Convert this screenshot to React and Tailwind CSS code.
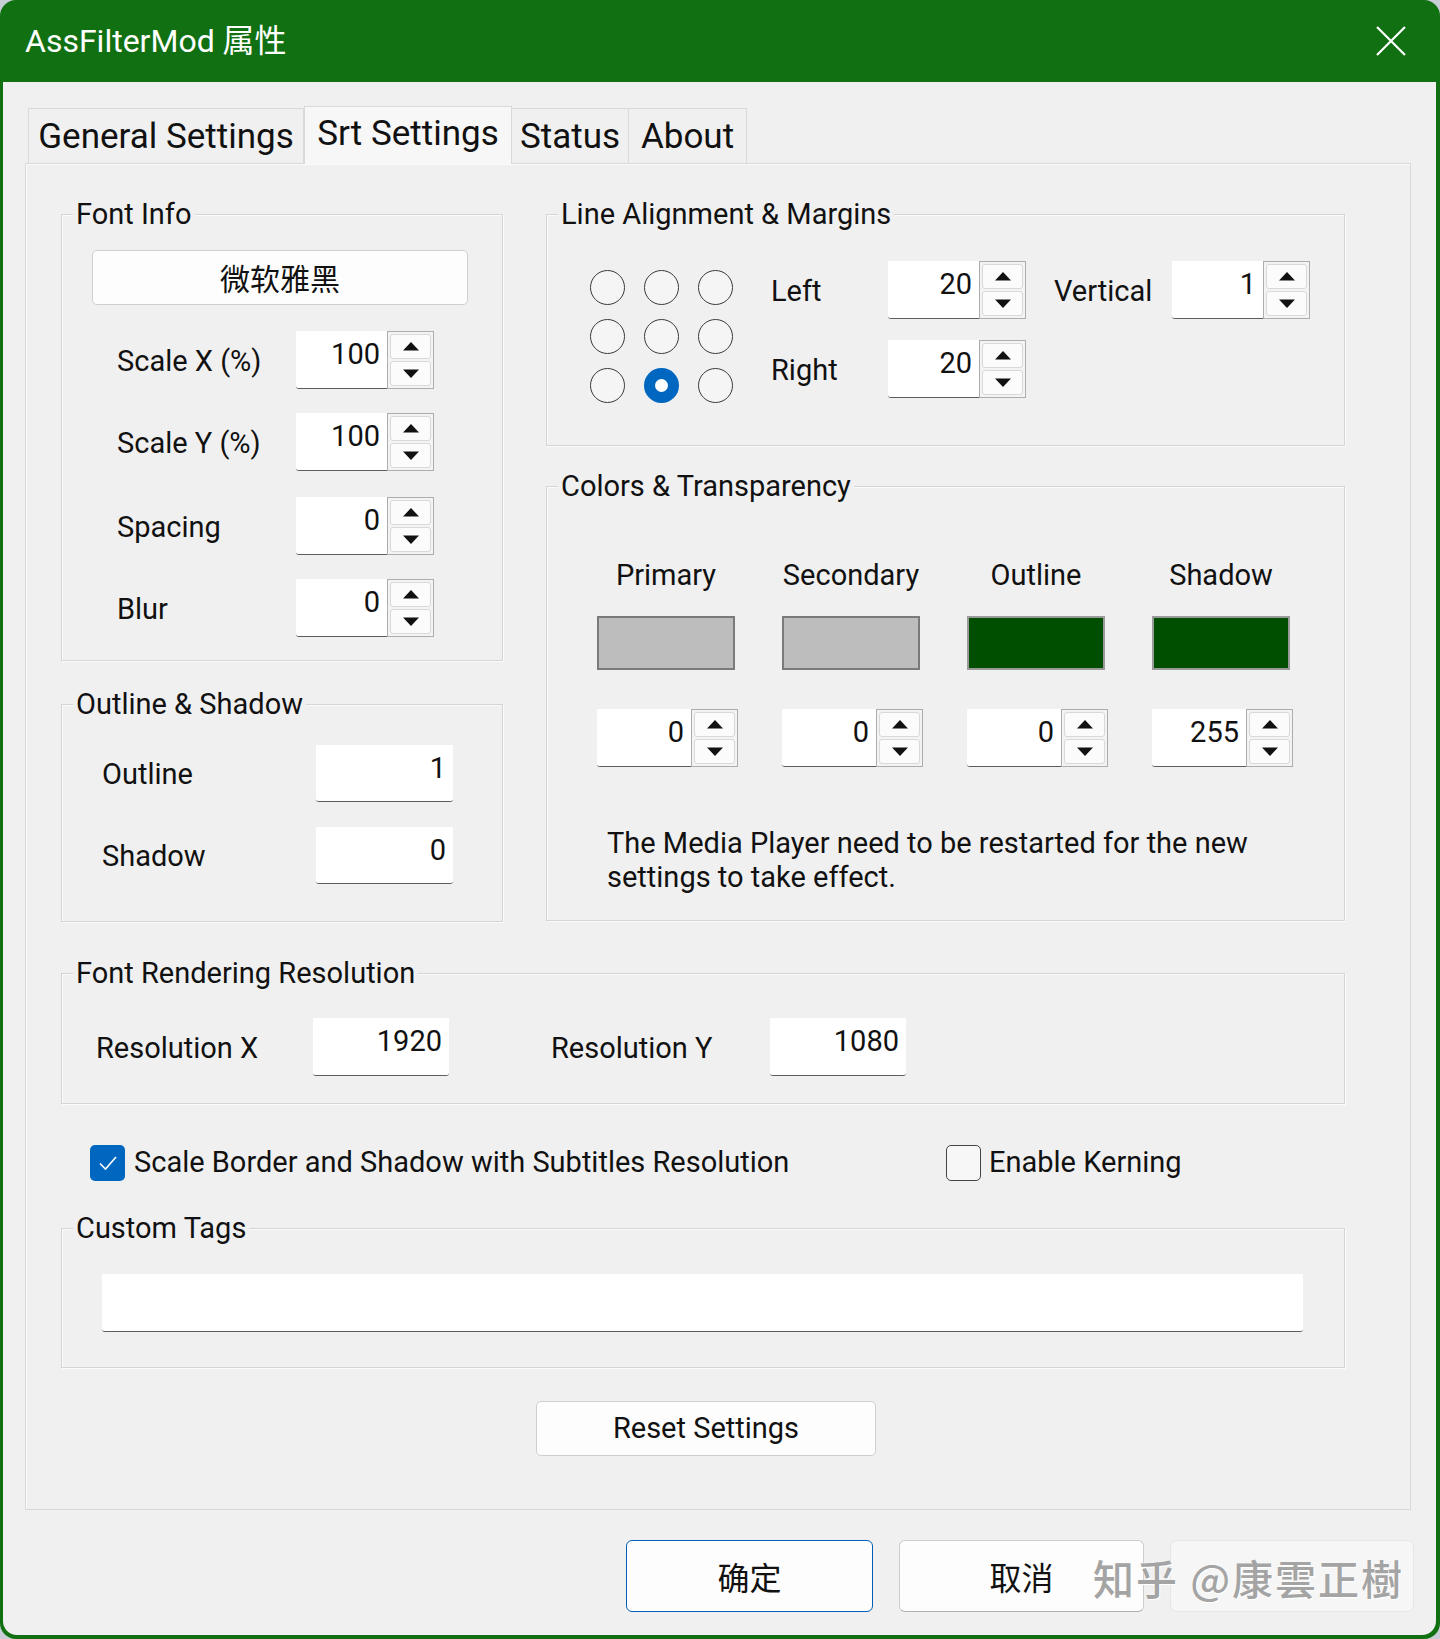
import React from "react";

const Tri = ({ down }) => (
  <svg width="18" height="11" viewBox="0 0 18 11">
    <path d={down ? "M1 1.5h16L9 10z" : "M1 9.5h16L9 1z"} fill="#111" />
  </svg>
);

const Spin = ({ value, wide }) => (
  <div className={wide ? "flex h-[58px] w-[141px]" : "flex h-[58px] w-[138px]"}>
    <div className="flex-1 bg-white border-b-[1.5px] border-[#5c5c5c] rounded-bl-[3px] flex justify-end items-start pt-[3px] pr-[7px] leading-[40px]">
      {value}
    </div>
    <div className="w-[47px] border border-[#adadad] bg-[#f3f3f3] flex flex-col p-[2px] gap-[2px]">
      <div className="flex-1 border border-[#d9d9d9] rounded-[3px] bg-[#fbfbfb] flex items-center justify-center">
        <Tri />
      </div>
      <div className="flex-1 border border-[#d9d9d9] rounded-[3px] bg-[#fbfbfb] flex items-center justify-center">
        <Tri down />
      </div>
    </div>
  </div>
);

const Edit = ({ value, className }) => (
  <div className={className}>
    <div className="h-full bg-white border-b-[1.5px] border-[#5c5c5c] rounded-b-[3px] flex justify-end items-start pt-[3px] pr-[7px] leading-[40px]">
      {value}
    </div>
  </div>
);

const GroupBox = ({ title, className, children }) => (
  <div className={className}>
    <div className="relative h-full border border-[#d4d4d4] shadow-[inset_1px_1px_0_#fbfbfb,1px_1px_0_#fbfbfb]">
      <div className="absolute left-[11px] -top-[21px] bg-[#f0f0f0] px-[3px] text-[29px] leading-[40px]">
        {title}
      </div>
      {children}
    </div>
  </div>
);

const Radio = ({ checked }) =>
  checked ? (
    <div className="w-[35px] h-[35px] rounded-full bg-[#0067c0] flex items-center justify-center">
      <div className="w-[13px] h-[13px] rounded-full bg-white" />
    </div>
  ) : (
    <div className="w-[35px] h-[35px] rounded-full border-[1.5px] border-[#3a3a3a] bg-[#f5f5f5]" />
  );

const Row = ({ label, value }) => (
  <div className="flex items-center h-[58px]">
    <div className="w-[179px] mt-[4px]">{label}</div>
    <Spin value={value} />
  </div>
);

export default function App() {
  const swatches = [
    { name: "Primary", color: "bg-[#bdbdbd] border-[#7a7a7a]", value: "0" },
    { name: "Secondary", color: "bg-[#bdbdbd] border-[#7a7a7a]", value: "0" },
    { name: "Outline", color: "bg-[#004f00] border-[#9a9a9a]", value: "0" },
    { name: "Shadow", color: "bg-[#004f00] border-[#9a9a9a]", value: "255" },
  ];

  return (
    <div className="w-[1440px] h-[1639px] bg-[#c9cdd8] font-['Roboto','Noto_Sans_CJK_SC',sans-serif] text-[29px] text-[#111]">
      <div className="w-full h-full rounded-[16px] bg-[#117012] flex flex-col overflow-hidden">
        {/* title bar */}
        <div className="h-[82px] shrink-0 flex items-center justify-between pl-[25px] pr-[34px]">
          <div className="text-white text-[32px] leading-none">AssFilterMod 属性</div>
          <svg width="30" height="30" viewBox="0 0 30 30">
            <path d="M1 1L29 29M29 1L1 29" stroke="#ffffff" strokeWidth="2.2" />
          </svg>
        </div>

        {/* body */}
        <div className="flex-1 ml-[3px] mr-[4px] mb-[4px] bg-[#f0f0f0] rounded-b-[14px] pl-[22px] pr-[25px] pt-[24px]">
          {/* tabs */}
          <div className="flex items-end h-[57px] pl-[3px]">
            <div className="w-[276px] h-[55px] border border-b-0 border-[#d9d9d9] flex items-center justify-center text-[35px] leading-none">
              General Settings
            </div>
            <div className="relative z-10 -mb-[1px] w-[208px] h-[58px] border border-b-0 border-[#d9d9d9] bg-[#f7f7f7] flex items-center justify-center text-[35px] leading-none pb-[4px]">
              Srt Settings
            </div>
            <div className="w-[117px] h-[55px] border border-b-0 border-l-0 border-[#d9d9d9] flex items-center justify-center text-[35px] leading-none">
              Status
            </div>
            <div className="w-[118px] h-[55px] border border-b-0 border-l-0 border-[#d9d9d9] flex items-center justify-center text-[35px] leading-none">
              About
            </div>
          </div>

          {/* panel */}
          <div className="border border-[#d9d9d9] shadow-[inset_1px_1px_0_#fafafa] pl-[35px] pr-[65px] pt-[50px] pb-[53px]">
            <div className="flex gap-[43px] items-start">
              {/* left column */}
              <div className="w-[442px] flex flex-col">
                <GroupBox title="Font Info" className="h-[447px]">
                  <div className="pt-[35px] pl-[30px]">
                    <div className="w-[376px] h-[55px] rounded-[5px] border border-[#cfcfcf] bg-[#fdfdfd] flex items-center justify-center text-[30px] font-['Noto_Sans_CJK_SC',sans-serif]">
                      微软雅黑
                    </div>
                  </div>
                  <div className="pl-[55px] mt-[26px] flex flex-col">
                    <Row label="Scale X (%)" value="100" />
                    <div className="mt-[24px]">
                      <Row label="Scale Y (%)" value="100" />
                    </div>
                    <div className="mt-[26px]">
                      <Row label="Spacing" value="0" />
                    </div>
                    <div className="mt-[24px]">
                      <Row label="Blur" value="0" />
                    </div>
                  </div>
                </GroupBox>

                <GroupBox title="Outline & Shadow" className="mt-[43px] h-[218px]">
                  <div className="pt-[40px] pl-[40px] flex flex-col gap-[25px]">
                    <div className="flex items-center h-[57px]">
                      <div className="w-[214px] mt-[3px]">Outline</div>
                      <Edit value="1" className="w-[137px] h-[57px]" />
                    </div>
                    <div className="flex items-center h-[57px]">
                      <div className="w-[214px] mt-[3px]">Shadow</div>
                      <Edit value="0" className="w-[137px] h-[57px]" />
                    </div>
                  </div>
                </GroupBox>
              </div>

              {/* right column */}
              <div className="w-[799px] flex flex-col">
                <GroupBox title="Line Alignment & Margins" className="h-[232px]">
                  <div className="flex pt-[46px] pl-[43px]">
                    <div className="mt-[9px] grid grid-cols-[35px_35px_35px] gap-x-[19px] gap-y-[14px]">
                      <Radio />
                      <Radio />
                      <Radio />
                      <Radio />
                      <Radio />
                      <Radio />
                      <Radio />
                      <Radio checked />
                      <Radio />
                    </div>
                    <div className="ml-[38px] flex flex-col gap-[21px]">
                      <div className="flex items-center">
                        <div className="w-[117px] mt-[4px]">Left</div>
                        <Spin value="20" />
                        <div className="ml-[28px] w-[118px] mt-[4px]">Vertical</div>
                        <Spin value="1" />
                      </div>
                      <div className="flex items-center">
                        <div className="w-[117px] mt-[4px]">Right</div>
                        <Spin value="20" />
                      </div>
                    </div>
                  </div>
                </GroupBox>

                <GroupBox title="Colors & Transparency" className="mt-[40px] h-[435px]">
                  <div className="pt-[68px] pl-[50px] grid grid-cols-[138px_138px_138px_138px] gap-x-[47px]">
                    {swatches.map((s) => (
                      <div key={s.name} className="flex flex-col">
                        <div className="h-[40px] leading-[40px] text-center whitespace-nowrap">{s.name}</div>
                        <div className={`mt-[21px] h-[54px] border-2 ${s.color}`} />
                        <div className="mt-[39px]">
                          <Spin value={s.value} wide />
                        </div>
                      </div>
                    ))}
                  </div>
                  <div className="pl-[60px] mt-[59px] leading-[34px] w-[740px]">
                    The Media Player need to be restarted for the new settings to take effect.
                  </div>
                </GroupBox>
              </div>
            </div>

            <GroupBox title="Font Rendering Resolution" className="mt-[51px] h-[131px]">
              <div className="pt-[44px] pl-[34px] flex items-center">
                <div className="w-[217px] mt-[3px]">Resolution X</div>
                <Edit value="1920" className="w-[136px] h-[58px]" />
                <div className="ml-[102px] w-[219px] mt-[3px]">Resolution Y</div>
                <Edit value="1080" className="w-[136px] h-[58px]" />
              </div>
            </GroupBox>

            <div className="mt-[41px] h-[36px] flex items-center">
              <div className="ml-[29px] w-[856px] flex items-center">
                <div className="w-[35px] h-[36px] rounded-[5px] bg-[#0067c0] flex items-center justify-center">
                  <svg width="20" height="16" viewBox="0 0 20 16">
                    <path d="M2 8.5L7.5 14L18 2" stroke="#fff" strokeWidth="1.6" fill="none" />
                  </svg>
                </div>
                <div className="ml-[9px] whitespace-nowrap">Scale Border and Shadow with Subtitles Resolution</div>
              </div>
              <div className="flex items-center">
                <div className="w-[35px] h-[36px] rounded-[5px] border-[1.5px] border-[#444] bg-[#f7f7f7]" />
                <div className="ml-[8px] whitespace-nowrap">Enable Kerning</div>
              </div>
            </div>

            <GroupBox title="Custom Tags" className="mt-[47px] h-[140px]">
              <div className="pt-[45px] pl-[40px]">
                <div className="w-[1201px] h-[58px] bg-white border-b-[1.5px] border-[#5c5c5c] rounded-b-[3px]" />
              </div>
            </GroupBox>

            <div className="mt-[33px] ml-[475px] w-[340px] h-[55px] rounded-[5px] border border-[#cfcfcf] bg-[#fdfdfd] flex items-center justify-center">
              Reset Settings
            </div>
          </div>

          {/* dialog buttons */}
          <div className="relative mt-[30px] -mr-[3px] flex justify-end gap-[26px]">
            <div className="w-[247px] h-[72px] rounded-[6px] border-[1.5px] border-[#005fb8] bg-[#fdfdfd] flex items-center justify-center text-[32px] font-['Noto_Sans_CJK_SC',sans-serif]">
              确定
            </div>
            <div className="w-[245px] h-[72px] rounded-[6px] border border-[#cdcdcd] border-b-[#b0b0b0] bg-[#fdfdfd] flex items-center justify-center text-[32px] font-['Noto_Sans_CJK_SC',sans-serif]">
              取消
            </div>
            <div className="w-[244px] h-[72px] rounded-[6px] border border-[#e6e6e6] bg-[#f6f6f6]" />
            <div className="absolute left-[1068px] top-[17px] text-[41px] leading-none tracking-[2px] text-[#a4a4a4] font-medium font-['Noto_Sans_CJK_SC',sans-serif] [text-shadow:0_0_2px_#ffffff,1px_1px_0_#ffffff] whitespace-nowrap">
              知乎 @康雲正樹
            </div>
          </div>
        </div>
      </div>
    </div>
  );
}
